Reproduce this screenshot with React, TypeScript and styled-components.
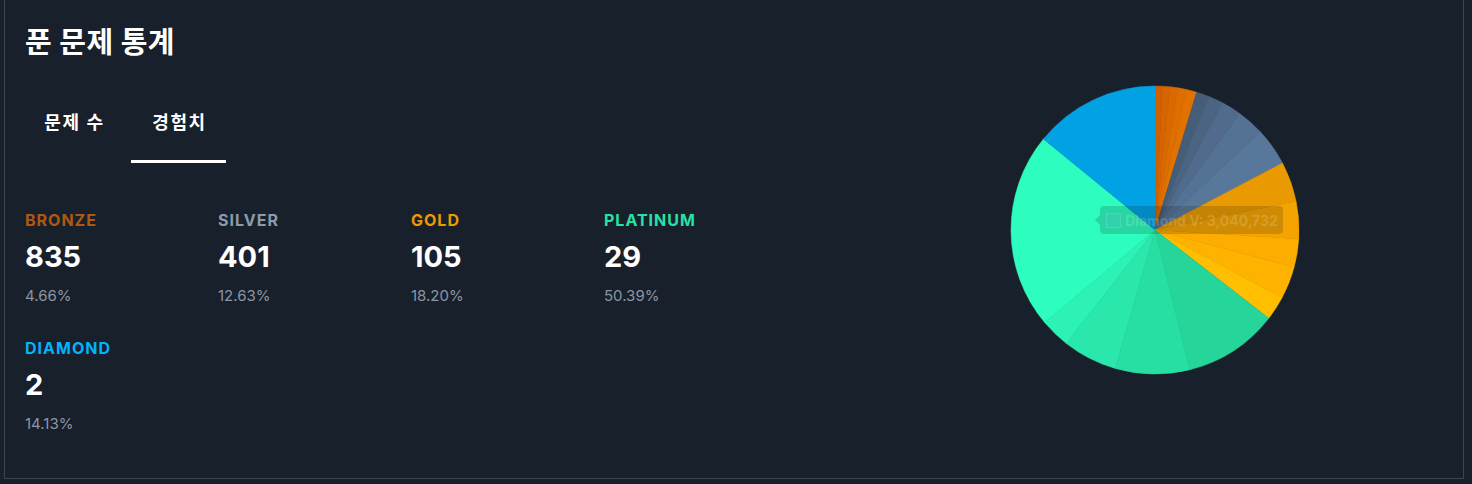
import React from "react";
import styled, { createGlobalStyle } from "styled-components";

const Global = createGlobalStyle`
  html, body { margin: 0; padding: 0; background: #18202b; }
  body { font-family: "Inter", "Noto Sans CJK KR", sans-serif; color: #fff; }
`;

const Page = styled.div`
  padding: 0 8px 5px 4px;
`;

const Panel = styled.section`
  box-sizing: border-box;
  height: 479px;
  border: 1px solid #3a4452;
  border-top: none;
  padding: 24px 20px 0 20px;
  background: #18202b;
`;

const Title = styled.h2`
  margin: 0;
  font-size: 29px;
  line-height: 38px;
  font-weight: 700;
  letter-spacing: 0.4px;
`;

const Body = styled.div`
  display: flex;
  margin-top: 24px;
`;

const Left = styled.div`
  flex: 1;
`;

const Tabs = styled.div`
  display: flex;
  gap: 10px;
  padding-left: 1px;
`;

const Tab = styled.button<{ $active?: boolean }>`
  width: 95px;
  height: 77px;
  background: none;
  border: none;
  border-bottom: 3px solid ${(p) => (p.$active ? "#ffffff" : "transparent")};
  color: #fff;
  font-family: inherit;
  font-size: 18px;
  font-weight: 700;
  letter-spacing: 1.6px;
  padding: 0 0 5px 2px;
  cursor: pointer;
`;

const Grid = styled.div`
  display: grid;
  grid-template-columns: repeat(4, 193px);
  row-gap: 32px;
  margin-top: 47px;
`;

const Item = styled.div`
  display: flex;
  flex-direction: column;
`;

const Label = styled.div<{ $color: string }>`
  color: ${(p) => p.$color};
  font-size: 16px;
  line-height: 20px;
  font-weight: 700;
  letter-spacing: 1px;
`;

const Value = styled.div`
  font-size: 29px;
  line-height: 36px;
  font-weight: 700;
  margin-top: 9px;
`;

const Percent = styled.div`
  color: #8b96a4;
  font-size: 15px;
  line-height: 20px;
  margin-top: 11px;
`;

const ChartBox = styled.div`
  position: relative;
  width: 290px;
  height: 290px;
  margin-right: 143px;
  margin-top: -1px;
`;

const Tooltip = styled.div`
  position: absolute;
  left: 90px;
  top: 121px;
  height: 28px;
  display: flex;
  align-items: center;
  gap: 4px;
  padding: 0 5px 0 6px;
  border-radius: 4px;
  background: rgba(20, 20, 20, 0.17);
  color: rgba(255, 255, 255, 0.18);
  font-size: 14px;
  font-weight: 700;
  white-space: nowrap;
  &::before {
    content: "";
    position: absolute;
    left: -5px;
    top: 9px;
    border-style: solid;
    border-width: 5px 5px 5px 0;
    border-color: transparent rgba(20, 20, 20, 0.17) transparent transparent;
  }
`;

const Swatch = styled.span`
  width: 13px;
  height: 13px;
  background: rgba(80, 200, 220, 0.25);
  border: 1px solid rgba(255, 255, 255, 0.12);
`;

type Slice = [number, number, string];

const slices: Slice[] = [
  [0, 3, "#cf5f00"],
  [3, 6, "#d56500"],
  [6, 9, "#da6a00"],
  [9, 12.5, "#de6e00"],
  [12.5, 16.8, "#e27200"],
  [16.8, 22, "#465d78"],
  [22, 28, "#4b6482"],
  [28, 36, "#506b8b"],
  [36, 47, "#547294"],
  [47, 62.3, "#58789b"],
  [62.3, 78.5, "#e99a00"],
  [78.5, 93.6, "#f4a400"],
  [93.6, 105, "#fdac00"],
  [105, 118, "#ffb300"],
  [118, 127.8, "#ffbe00"],
  [127.8, 166, "#26d599"],
  [166, 196, "#28dfa3"],
  [196, 218, "#2ae8ac"],
  [218, 230, "#2cf2b5"],
  [230, 309.2, "#2dfebf"],
  [309.2, 360, "#00a2e3"],
];

const CX = 145;
const CY = 145;
const R = 144;

function pt(a: number): [number, number] {
  const rad = (a * Math.PI) / 180;
  return [CX + R * Math.sin(rad), CY - R * Math.cos(rad)];
}

function arc(a0: number, a1: number) {
  const [x0, y0] = pt(a0);
  const [x1, y1] = pt(a1);
  const large = a1 - a0 > 180 ? 1 : 0;
  return `M${CX},${CY} L${x0},${y0} A${R},${R} 0 ${large} 1 ${x1},${y1} Z`;
}

const stats = [
  { name: "BRONZE", color: "#ad5a10", value: "835", pct: "4.66%" },
  { name: "SILVER", color: "#8d9aab", value: "401", pct: "12.63%" },
  { name: "GOLD", color: "#ec9a00", value: "105", pct: "18.20%" },
  { name: "PLATINUM", color: "#27e2a4", value: "29", pct: "50.39%" },
  { name: "DIAMOND", color: "#00b4fc", value: "2", pct: "14.13%" },
];

export default function App() {
  return (
    <>
      <Global />
      <Page>
        <Panel>
          <Title>푼 문제 통계</Title>
          <Body>
            <Left>
              <Tabs>
                <Tab>문제 수</Tab>
                <Tab $active>경험치</Tab>
              </Tabs>
              <Grid>
                {stats.map((s) => (
                  <Item key={s.name}>
                    <Label $color={s.color}>{s.name}</Label>
                    <Value>{s.value}</Value>
                    <Percent>{s.pct}</Percent>
                  </Item>
                ))}
              </Grid>
            </Left>
            <ChartBox>
              <svg width="290" height="290" viewBox="0 0 290 290">
                {slices.map(([a0, a1, c], i) => (
                  <path key={i} d={arc(a0, a1)} fill={c} stroke={c} strokeWidth={0.5} />
                ))}
              </svg>
              <Tooltip>
                <Swatch />
                Diamond V: 3,040,732
              </Tooltip>
            </ChartBox>
          </Body>
        </Panel>
      </Page>
    </>
  );
}
